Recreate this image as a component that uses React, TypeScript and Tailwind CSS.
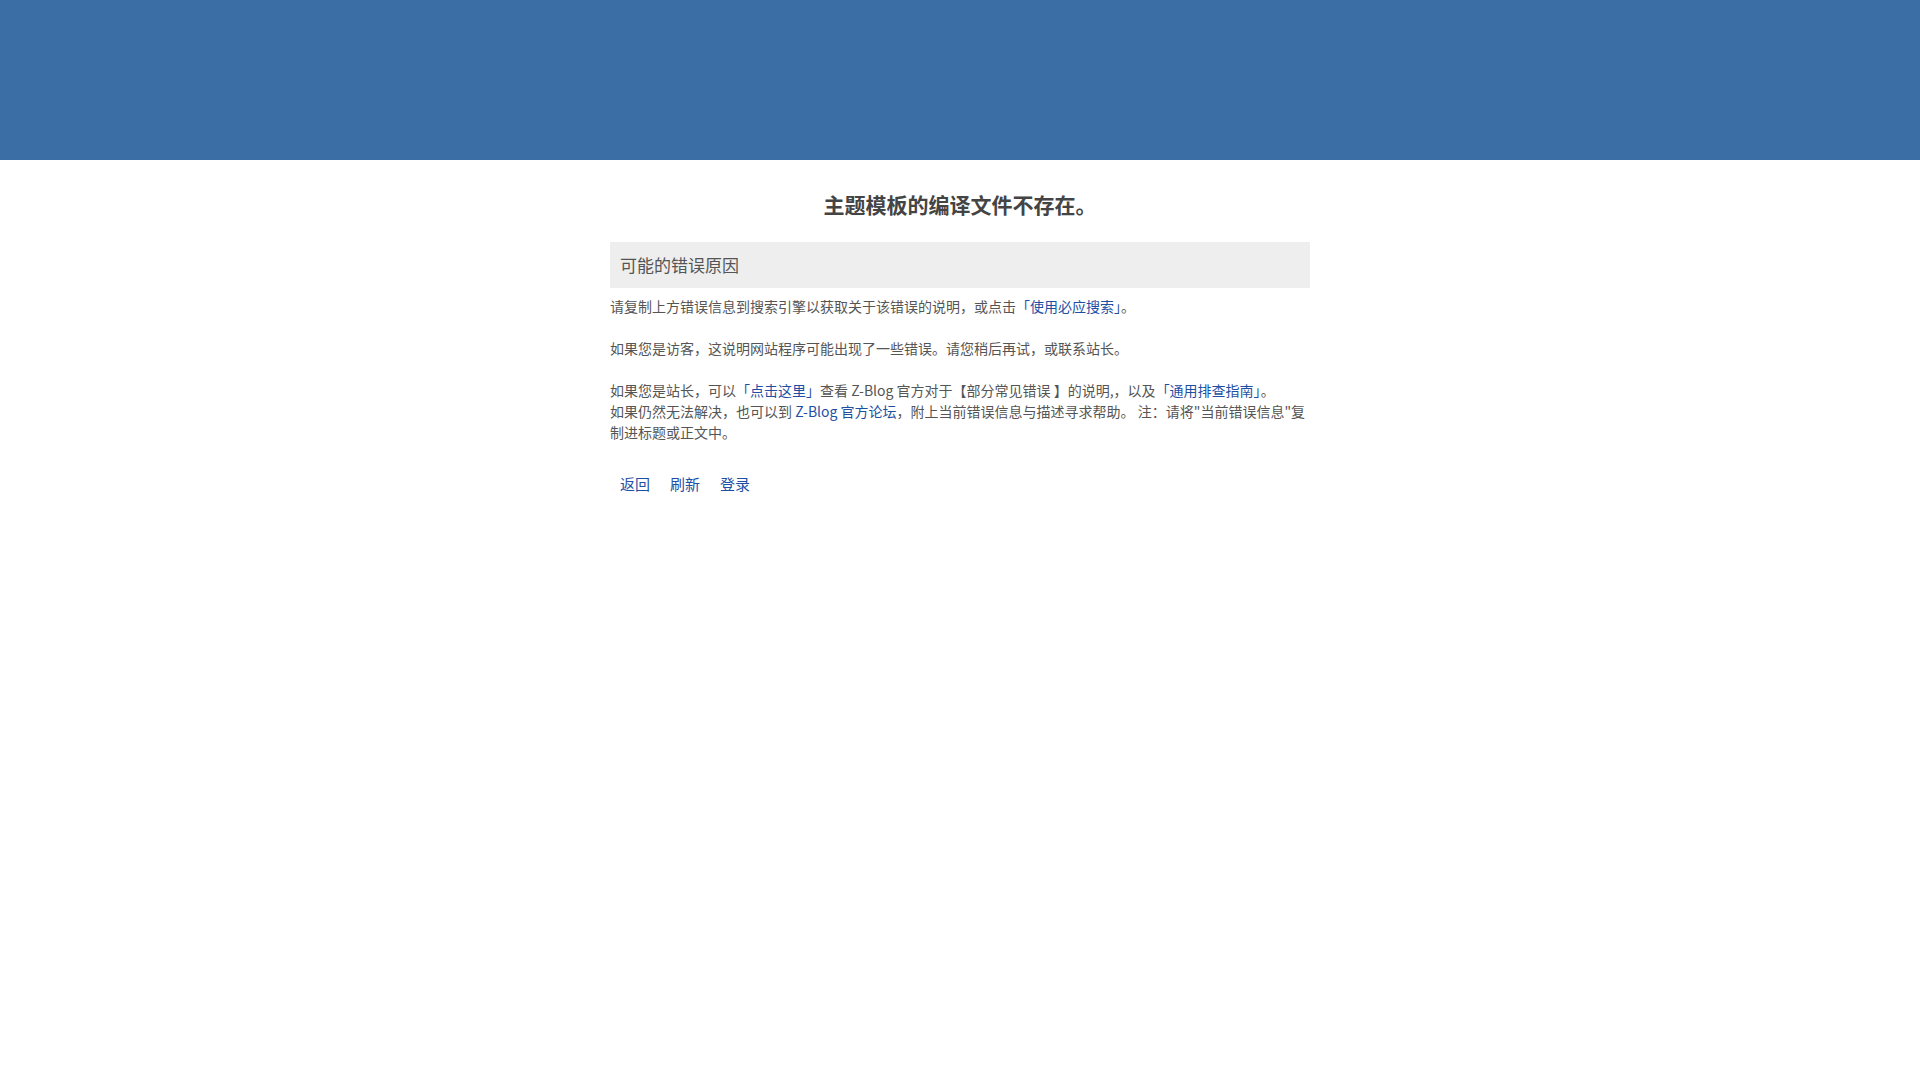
import React from 'react';

const font = { fontFamily: '"Noto Sans CJK SC", "Noto Sans", sans-serif' };

export default function App() {
  return (
    <div className="min-h-screen bg-white text-[#555]" style={font}>
      {/* Top banner */}
      <div className="h-[160px] bg-[#3b6ea5]" />

      <div className="w-[700px] mx-auto">
        <h1 className="mt-[29px] text-center text-[21px] leading-[30px] font-bold text-[#444]">
          主题模板的编译文件不存在。
        </h1>

        <div className="mt-[23px] h-[46px] bg-[#eeeeee] px-[10px] text-[17px] leading-[46px] text-[#555]">
          可能的错误原因
        </div>

        <div className="mt-[8px] text-[14px] leading-[21px] space-y-[21px]">
          <p>
            请复制上方错误信息到搜索引擎以获取关于该错误的说明，或点击
            <a href="#" className="text-[#1e4fa3]">「使用必应搜索」</a>。
          </p>
          <p>如果您是访客，这说明网站程序可能出现了一些错误。请您稍后再试，或联系站长。</p>
          <p>
            如果您是站长，可以<a href="#" className="text-[#1e4fa3]">「点击这里」</a>查看 Z-Blog 官方对于【部分常见错误 】的说明,，以及
            <a href="#" className="text-[#1e4fa3]">「通用排查指南」</a>。
            <br />
            如果仍然无法解决，也可以到 <a href="#" className="text-[#1e4fa3]">Z-Blog 官方论坛</a>，附上当前错误信息与描述寻求帮助。 注：请将"当前错误信息"复制进标题或正文中。
          </p>
        </div>

        <div className="mt-[29px] flex text-[15px] leading-[24px]">
          <a href="#" className="px-[10px] text-[#1e4fa3]">返回</a>
          <a href="#" className="px-[10px] text-[#1e4fa3]">刷新</a>
          <a href="#" className="px-[10px] text-[#1e4fa3]">登录</a>
        </div>
      </div>
    </div>
  );
}
